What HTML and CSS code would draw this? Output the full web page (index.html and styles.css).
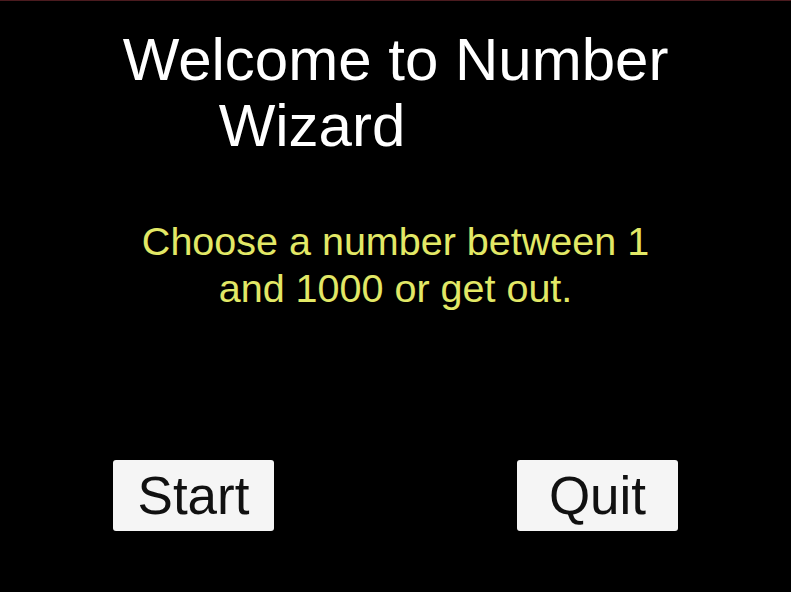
FILE: index.html
```html
<!DOCTYPE html>
<html>
<head>
<meta charset="utf-8">
<link rel="stylesheet" href="styles.css">
</head>
<body>
<div class="screen">
  <h1 class="title">
    <span class="line">Welcome to Number</span>
    <span class="line line-offset">Wizard</span>
  </h1>
  <p class="subtitle">Choose a number between 1<br>and 1000 or get out.</p>
  <div class="buttons">
    <button class="btn">Start</button>
    <button class="btn">Quit</button>
  </div>
</div>
</body>
</html>
```
FILE: styles.css
```css
html, body {
  margin: 0;
  padding: 0;
  background: #000;
}
.screen {
  width: 791px;
  height: 592px;
  box-sizing: border-box;
  border-top: 1px solid #4b1b1f;
  background: #000;
  font-family: "Liberation Sans", Arial, sans-serif;
  display: flex;
  flex-direction: column;
  overflow: hidden;
}
.title {
  margin: 26px 0 0 0;
  font-weight: normal;
  font-size: 60px;
  line-height: 66px;
  color: #fff;
  text-align: center;
}
.line {
  display: block;
}
.line-offset {
  padding-right: 167px;
}
.subtitle {
  margin: 59px 0 0 0;
  font-size: 39.5px;
  line-height: 47px;
  color: #e2e866;
  text-align: center;
}
.buttons {
  margin-top: 148px;
  padding: 0 113px;
  display: flex;
  justify-content: space-between;
}
.btn {
  width: 161px;
  height: 71px;
  border: none;
  border-radius: 3px;
  background: #f5f5f5;
  color: #111;
  font-family: "Liberation Sans", Arial, sans-serif;
  font-size: 53px;
  line-height: 71px;
  padding: 0;
}
```
